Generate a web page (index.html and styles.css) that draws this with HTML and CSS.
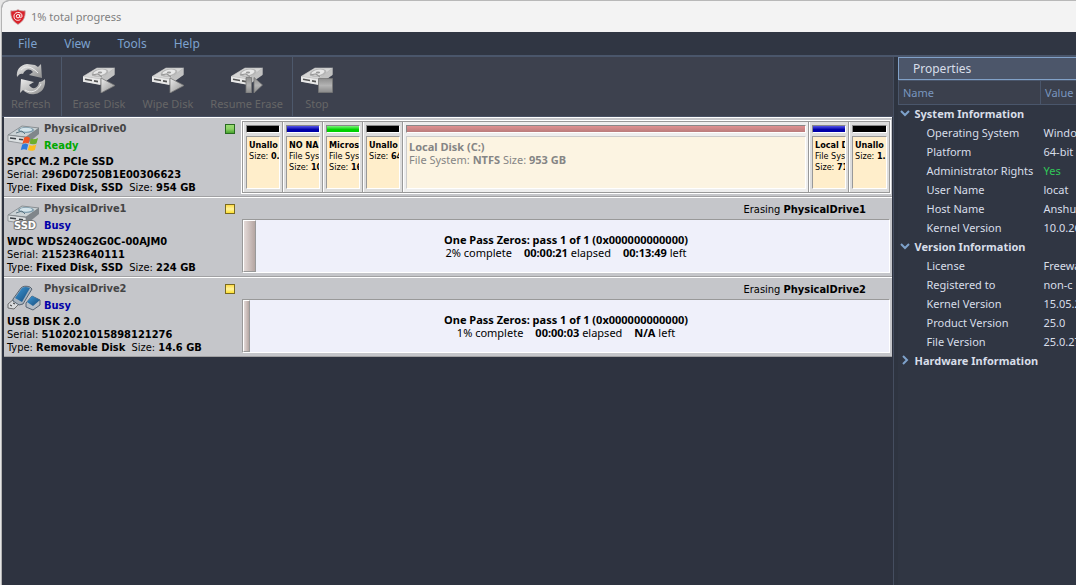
FILE: index.html
```html
<!DOCTYPE html>
<html lang="en">
<head>
<meta charset="utf-8">
<title>1% total progress</title>
<link rel="stylesheet" href="styles.css">
</head>
<body>
<svg class="sprite" aria-hidden="true">
  <defs>
    <linearGradient id="silver" x1="0" y1="0" x2="1" y2="1"><stop offset="0" stop-color="#eee"/><stop offset="1" stop-color="#8c8c8c"/></linearGradient>
    <linearGradient id="metal" x1="0" y1="0" x2="0" y2="1"><stop offset="0" stop-color="#8e8e8e"/><stop offset=".5" stop-color="#b4b4b4"/><stop offset="1" stop-color="#8a8a8a"/></linearGradient>
    <linearGradient id="usb" x1="0" y1="0" x2="1" y2="1"><stop offset="0" stop-color="#3b98d8"/><stop offset="1" stop-color="#174a78"/></linearGradient>
    <symbol id="disk" viewBox="0 0 34 26">
      <path d="M1 9.500 15 1h17.500v6.500L18 17.500 1 14.500z" fill="#aaa"/>
      <path d="M1 9.500 15 1h17.500L18.500 12z" fill="#d6d6d6" stroke="#bdbdbd" stroke-width=".6"/>
      <ellipse cx="18" cy="5.800" rx="8.500" ry="3.800" fill="#b4b4b4" transform="rotate(-10 18 5.800)"/>
      <ellipse cx="18" cy="5.500" rx="6.500" ry="2.700" fill="#e8e8e8" transform="rotate(-10 18 5.500)"/>
      <ellipse cx="18" cy="5.500" rx="2.200" ry="1.100" fill="#999"/>
      <path d="m10 8 6-1 4 3" fill="none" stroke="#999" stroke-width="1.200"/>
      <path d="m1 9.500 17.500 2.700V18L1 14.800z" fill="#e8e8e8"/>
      <path d="m18.500 12.200 14-11V8l-14 10z" fill="#c2c2c2"/>
      <path d="m3 12.300 7 1.200m2 .4 4 .7" stroke="#555" stroke-width="1.600"/>
    </symbol>
    <symbol id="drive" viewBox="0 0 34 26">
      <path d="M1 11 15 1l17 2v6L21 18 1 16z" fill="#80868b"/>
      <path d="M1 10 15 1l17 2-13 9z" fill="#cbd2d5" stroke="#747b80" stroke-width=".7"/>
      <ellipse cx="19" cy="5" rx="8" ry="3" fill="#7e9dad"/>
      <ellipse cx="19" cy="4.700" rx="6.200" ry="2" fill="#d4e4eb"/>
      <path d="m9 8 6-2 3 3" fill="none" stroke="#5e7682"/>
      <path d="m1 10 18 2.400V19L1 16z" fill="#dce0e2" stroke="#7c8185" stroke-width=".7"/>
      <path d="m3 13 6 .8m3 .4 4 .6" stroke="#3c4247" stroke-width="1.500"/>
    </symbol>
  </defs>
</svg>
<div class="window">
  <header class="titlebar">
    <svg class="logo" viewBox="0 0 16 16"><path d="M8 .5C10 2 13 2 15.200 1.800c.4 6.500-1.700 10.600-7.200 13.700C2.500 12.400.4 8.300.8 1.800 3 2 6 2 8 .5z" fill="#d9232b" stroke="#c9b4b4" stroke-width=".8"/><circle cx="8" cy="7.200" r="1.700" fill="none" stroke="#fff"/><path d="M9.800 5.300v2.500c0 1.500 2.200 1.100 2.200-.8 0-5-8-4.800-8 .3 0 4.100 4 4.900 6.400 3.200" fill="none" stroke="#fff"/></svg>
    <span>1% total progress</span>
  </header>
  <nav class="menu">
    <button>File</button><button>View</button><button>Tools</button><button>Help</button>
  </nav>
  <div class="workspace">
    <main class="main">
      <div class="toolbar">
        <div class="group">
          <button class="tool"><svg class="refresh-icon" viewBox="0 0 30 34"><path d="M1 15C0 8 4 3 11 2l8 1 3 2 3-3 1 14-13-3 4-3c-3-4-8-3-10 2-2-1-4 0-6 3z" fill="url(#silver)"/><path d="M29 17c1 8-3 14-10 15-5 1-9-1-12-4l-3 3 1-14 13 3-5 3c3 5 9 4 10-3 2 0 4-1 6-3z" fill="url(#silver)"/><path d="M5 8c6-6 12-2 17 3M9 28c6 4 13 1 16-6" fill="none" stroke="#ededed"/></svg><span>Refresh</span></button>
        </div>
        <div class="group">
          <button class="tool"><svg class="tool-icon" viewBox="0 0 34 26"><use href="#disk"/><path d="m19 11 14 7.500L19 26z" fill="url(#silver)" stroke="#777" stroke-width=".8"/></svg><span>Erase Disk</span></button>
          <button class="tool"><svg class="tool-icon" viewBox="0 0 34 26"><use href="#disk"/><path d="m19 11 14 7.500L19 26z" fill="url(#silver)" stroke="#777" stroke-width=".8"/></svg><span>Wipe Disk</span></button>
          <button class="tool"><svg class="tool-icon" viewBox="0 0 34 26"><use href="#disk"/><path d="M16 10.500h5.500V26H16zM24 10.500l8.500 7.500-8.500 8z" fill="url(#metal)" stroke="#777" stroke-width=".8"/></svg><span>Resume Erase</span></button>
        </div>
        <div class="group">
          <button class="tool"><svg class="tool-icon" viewBox="0 0 34 26"><use href="#disk"/><path d="M18.500 11.500h14v14h-14z" fill="url(#metal)" stroke="#777" stroke-width=".8"/></svg><span>Stop</span></button>
        </div>
      </div>
      <section class="drive">
        <div class="info">
          <div class="head">
            <svg class="drive-icon" viewBox="0 0 34 26"><use href="#drive"/><path d="M17 13c3-2 4-1 6 0l-1.500 5.500c-2-1-3.500-1-6 0z" fill="#ef5425"/><path d="M24 13.500c2 1 4 1 7-.5l-1.500 5.500c-3 1.200-5 1-7 0z" fill="#6cae2c"/><path d="M15.200 19.500c3-1.200 4-1 6 0L19.800 25c-2-1-3.500-1-6 0z" fill="#2d7bdc"/><path d="M22.300 20c2 1 4 1 7-.5L27.800 25c-3 1.200-5 1-7 0z" fill="#fbbd1b"/></svg>
            <div><h2>PhysicalDrive0</h2><p class="ready">Ready</p></div>
            <i class="led green"></i>
          </div>
          <p class="model">SPCC M.2 PCIe SSD</p>
          <p>Serial: <b>296D07250B1E00306623</b></p>
          <p>Type: <b>Fixed Disk, SSD</b> <span class="size">Size: <b>954 GB</b></span></p>
        </div>
        <div class="partitions">
          <div class="part black"><i class="cap"></i><div class="label"><b>Unallo</b><br>Size: <b>0.</b></div></div>
          <div class="part blue"><i class="cap"></i><div class="label"><b>NO NA</b><br>File Sys<br>Size: <b>10</b></div></div>
          <div class="part lime"><i class="cap"></i><div class="label"><b>Micros</b><br>File Sys<br>Size: <b>16</b></div></div>
          <div class="part black"><i class="cap"></i><div class="label"><b>Unallo</b><br>Size: <b>64</b></div></div>
          <div class="part large"><i class="cap"></i><div class="label"><b>Local Disk (C:)</b><br>File System: <b>NTFS</b> Size: <b>953 GB</b></div></div>
          <div class="part blue"><i class="cap"></i><div class="label"><b>Local D</b><br>File Sys<br>Size: <b>71</b></div></div>
          <div class="part black"><i class="cap"></i><div class="label"><b>Unallo</b><br>Size: <b>1.</b></div></div>
        </div>
      </section>
      <section class="drive">
        <div class="info">
          <div class="head">
            <svg class="drive-icon" viewBox="0 0 34 26"><use href="#drive"/><text class="ssd" x="7" y="24">SSD</text></svg>
            <div><h2>PhysicalDrive1</h2><p class="busy">Busy</p></div>
            <i class="led yellow"></i>
          </div>
          <p class="model">WDC WDS240G2G0C-00AJM0</p>
          <p>Serial: <b>21523R640111</b></p>
          <p>Type: <b>Fixed Disk, SSD</b> <span class="size">Size: <b>224 GB</b></span></p>
        </div>
        <div class="job">
          <p class="job-title">Erasing <b>PhysicalDrive1</b></p>
          <div class="progress"><i class="fill" style="width:2%"></i>
            <div class="stats"><b>One Pass Zeros: pass 1 of 1 (0x000000000000)</b>
              <p><span>2% complete</span><span><b>00:00:21</b> elapsed</span><span><b>00:13:49</b> left</span></p></div>
          </div>
        </div>
      </section>
      <section class="drive">
        <div class="info">
          <div class="head">
            <svg class="drive-icon" viewBox="0 0 34 26"><path d="m1 19 6-5 6 4-6 6-6-1z" fill="#d8dadd" stroke="#555" stroke-width=".8"/><path d="m3 20 2 1m1-3 2 1" stroke="#333"/><path d="M6 14 14 3q3-3 9-1l2 2-9 15-4 1-6-4z" fill="#a9b3be" stroke="#3e4d5d" stroke-width=".8"/><path d="m8 13 7-10q3-2 8 0l-8 14z" fill="url(#usb)"/><path d="m19 18 6-7 8 4v5l-7 5-7-3z" fill="#b4bdc7" stroke="#3e4d5d" stroke-width=".8"/><path d="m20 17 5-6 8 4-7 6z" fill="url(#usb)"/></svg>
            <div><h2>PhysicalDrive2</h2><p class="busy">Busy</p></div>
            <i class="led yellow"></i>
          </div>
          <p class="model">USB DISK 2.0</p>
          <p>Serial: <b>5102021015898121276</b></p>
          <p>Type: <b>Removable Disk</b> <span class="size">Size: <b>14.6 GB</b></span></p>
        </div>
        <div class="job">
          <p class="job-title">Erasing <b>PhysicalDrive2</b></p>
          <div class="progress"><i class="fill" style="width:1%"></i>
            <div class="stats"><b>One Pass Zeros: pass 1 of 1 (0x000000000000)</b>
              <p><span>1% complete</span><span><b>00:00:03</b> elapsed</span><span><b>N/A</b> left</span></p></div>
          </div>
        </div>
      </section>
    </main>
    <aside class="side">
      <h1>Properties</h1>
      <table>
        <thead><tr><th>Name</th><th>Value</th></tr></thead>
        <tbody>
          <tr class="cat"><td colspan="2"><svg viewBox="0 0 10 10"><path d="m1 3 4 4 4-4"/></svg>System Information</td></tr>
          <tr><td>Operating System</td><td>Windo</td></tr>
          <tr><td>Platform</td><td>64-bit</td></tr>
          <tr><td>Administrator Rights</td><td class="yes">Yes</td></tr>
          <tr><td>User Name</td><td>locat</td></tr>
          <tr><td>Host Name</td><td>Anshu</td></tr>
          <tr><td>Kernel Version</td><td>10.0.26</td></tr>
          <tr class="cat"><td colspan="2"><svg viewBox="0 0 10 10"><path d="m1 3 4 4 4-4"/></svg>Version Information</td></tr>
          <tr><td>License</td><td>Freewa</td></tr>
          <tr><td>Registered to</td><td>non-c</td></tr>
          <tr><td>Kernel Version</td><td>15.05.2</td></tr>
          <tr><td>Product Version</td><td>25.0</td></tr>
          <tr><td>File Version</td><td>25.0.27</td></tr>
          <tr class="cat"><td colspan="2"><svg viewBox="0 0 10 10"><path d="m3 1 4 4-4 4"/></svg>Hardware Information</td></tr>
        </tbody>
      </table>
    </aside>
  </div>
</div>
</body>
</html>
```
FILE: styles.css
```css
* { box-sizing: border-box; }
body { margin: 0; background: #e6e6e6; font: 12px/16px "Noto Sans", "Open Sans", sans-serif; overflow: hidden; }
p, h1, h2 { margin: 0; font-size: inherit; }
button { border: 0; background: none; padding: 0; font: inherit; color: inherit; }
.sprite { position: absolute; width: 0; height: 0; }
.window { display: flex; flex-direction: column; min-height: 100vh; margin-left: 1px; border-left: 1px solid #b4b4b4; border-top: 1px solid #b8b8b8; border-top-left-radius: 8px; background: #2e3440; overflow: hidden; }
.titlebar { display: flex; align-items: center; gap: 5px; height: 31px; padding-left: 8px; background: #f3f3f3; color: #818181; font-size: 11px; }
.logo { width: 16px; height: 16px; }
.menu { display: flex; gap: 27px; height: 23px; padding-left: 16px; background: #303643; color: #7da2ce; }
.workspace { display: flex; flex: 1; border-top: 2px solid #4a566b; }
.main { flex: 1; min-width: 0; padding-left: 2px; border-right: 1px solid #454e60; background: #2e3340; }
.toolbar { display: flex; height: 60px; margin-left: -2px; background: #3d414e; color: #666; border-bottom: 1px solid #4a5265; }
.group { display: flex; gap: 17px; padding: 0 9px 0 10px; border-right: 1px solid #4d586b; }
.group:first-child { padding: 0 11px 0 9px; }
.group:last-child { border: 0; padding-left: 7px; }
.tool { display: flex; flex-direction: column; align-items: center; justify-content: flex-end; padding-bottom: 4px; font-size: 11px; }
.tool-icon { width: 34px; height: 26px; margin-bottom: 3px; }
.refresh-icon { width: 30px; height: 34px; }
.drive { display: flex; height: 80px; margin-right: 1px; padding: 2px 1px 0 3px; border-top: 1px solid #fff; border-bottom: 1px solid #a1a1a3; background: #c5c6ca; font: 11px/13px "DejaVu Sans Condensed", sans-serif; color: #000; }
.info { width: 235px; flex: none; white-space: nowrap; }
.head { display: flex; gap: 3px; height: 34px; line-height: 17px; }
.head h2 { color: #444; }
.head div { flex: 1; }
.drive-icon { width: 34px; height: 28px; margin-top: 4px; }
.ssd { font: bold 11px "DejaVu Sans Condensed", sans-serif; fill: #fff; stroke: #777; stroke-width: 2px; paint-order: stroke; }
.ready { color: #00a800; font-weight: bold; }
.busy { color: #0000a8; font-weight: bold; }
.led { width: 10px; height: 10px; margin: 4px 7px 0 0; border: 1px solid #7a6a20; background: linear-gradient(#ffdb45, #fff3a0 50%, #ffe02e); }
.led.green { border-color: #286a20; background: linear-gradient(#9bdc72, #8ad065 50%, #48a52e); }
.model { font-weight: bold; padding-top: 2px; line-height: 12px; }
.size { margin-left: 3px; }
.partitions { display: flex; flex: 1; min-width: 0; margin: 1px 1px 3px 0; border: 1px solid #999; background: #ddd; outline: 1px solid #fff; }
.part { display: flex; flex-direction: column; width: 40px; padding: 3px 2px; border-right: 1px solid #999; border-left: 1px solid #fff; font: 9px/11px "DejaVu Sans Condensed", sans-serif; }
.part:last-child { border-right: 0; }
.part.large { flex: 1; background: #eee; color: #858585; font: 11px/13px "Noto Sans", sans-serif; }
.cap { height: 8px; margin-bottom: 3px; border: 1px solid #888; border-bottom-color: #fff; border-right-color: #fff; background: #000; }
.blue .cap { background: linear-gradient(#5555e8, #0000a8 60%); }
.lime .cap { background: linear-gradient(#7cf57c, #00d000 60%); }
.large .cap { background: linear-gradient(#e09090, #b97c7c); }
.label { flex: 1; overflow: hidden; white-space: nowrap; padding: 3px 0 3px 2px; border: 1px solid #999; border-bottom-color: #fff; border-right-color: #fff; background: #ffeecb; }
.large .label { background: #fcf4e2; border-color: #ccc #fff #fff #ccc; }
.job { display: flex; flex-direction: column; flex: 1; margin: 1px 1px 3px 0; }
.job-title { height: 18px; padding: 2px 24px 0; text-align: right; }
.progress { display: flex; flex: 1; border: 1px solid #999; border-bottom-color: #fff; border-right-color: #fff; background: #eff0fa; position: relative; }
.fill { position: absolute; inset: 0 auto 0 0; min-width: 7px; border: 1px solid #fff; border-right-color: #999; border-bottom-color: #999; background: linear-gradient(90deg, #e4dad8, #b5a6a2); }
.stats { margin: auto; text-align: center; font: 11px/13px "Noto Sans", sans-serif; }
.stats p { display: flex; justify-content: center; gap: 12px; }
.side { width: 178px; flex: none; margin-left: 4px; background: #303643; color: #d8dee9; overflow: hidden; }
.side h1 { height: 23px; margin: 0; padding: 0 14px; border: 1px solid #81a1c8; border-right: 0; background: #4c566a; font: 12px/22px "Noto Sans", sans-serif; }
table { table-layout: fixed; width: 100%; border-collapse: collapse; font-size: 11px; }
th, td { height: 19px; padding: 0 0 0 28px; text-align: left; white-space: nowrap; }
th { height: 24px; padding-left: 4px; border: 1px solid #4a566b; background: #3b404d; color: #7996bf; font-weight: normal; }
th:first-child { width: 142px; }
th + th { border-right: 0; }
td + td { padding-left: 3px; }
.cat td { padding-left: 1px; font-weight: bold; }
.cat svg { width: 10px; height: 10px; margin-right: 5px; fill: none; stroke: #7ea2cb; stroke-width: 2; }
.yes { color: #30c858; }
```
